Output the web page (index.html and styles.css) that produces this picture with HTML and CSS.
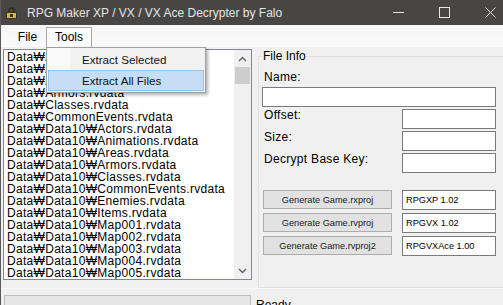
FILE: index.html
```html
<!DOCTYPE html>
<html lang="en">
  <head>
    <meta charset="UTF-8" />
    <title>RPG Maker XP / VX / VX Ace Decrypter by Falo</title>
    <link rel="stylesheet" href="styles.css">
  </head>
  <body>
    <div class="window">
      <!-- Title bar -->
      <div class="titlebar">
        <svg class="app-icon" viewBox="0 0 11 12">
          <path d="M3 6V3.5a2.5 2.5 0 0 1 5 0V6" fill="none" stroke="#2b2b2b" stroke-width="1.6"/>
          <rect x="0.5" y="5.5" width="10" height="6" fill="#d6b54e" stroke="#3a3320"/>
          <rect x="4" y="7" width="3" height="3" fill="#3a3320"/>
        </svg>
        <span class="title">RPG Maker XP / VX / VX Ace Decrypter by Falo</span>
        <div class="controls">
          <span class="ctl">
            <svg width="11" height="11" viewBox="0 0 11 11"><path d="M0 5.5h11" stroke="#e6e6e6"/></svg>
          </span>
          <span class="ctl">
            <svg width="11" height="11" viewBox="0 0 11 11"><rect x="0.5" y="0.5" width="10" height="10" fill="none" stroke="#e6e6e6"/></svg>
          </span>
          <span class="ctl">
            <svg width="11" height="11" viewBox="0 0 11 11"><path d="M0.5 0.5l10 10M10.5 0.5l-10 10" stroke="#e6e6e6"/></svg>
          </span>
        </div>
      </div>

      <!-- Menu bar -->
      <div class="menubar">
        <span class="menu-item">File</span>
        <span class="menu-item open">Tools
          <div class="dropdown">
            <div class="drop-item">Extract Selected</div>
            <div class="drop-item active">Extract All Files</div>
          </div>
        </span>
      </div>

      <div class="main">
        <!-- File list -->
        <div class="listbox">
          <ul class="files">
            <li>Data₩Actors.rvdata</li>
            <li>Data₩Animations.rvdata</li>
            <li>Data₩Areas.rvdata</li>
            <li>Data₩Armors.rvdata</li>
            <li>Data₩Classes.rvdata</li>
            <li>Data₩CommonEvents.rvdata</li>
            <li>Data₩Data10₩Actors.rvdata</li>
            <li>Data₩Data10₩Animations.rvdata</li>
            <li>Data₩Data10₩Areas.rvdata</li>
            <li>Data₩Data10₩Armors.rvdata</li>
            <li>Data₩Data10₩Classes.rvdata</li>
            <li>Data₩Data10₩CommonEvents.rvdata</li>
            <li>Data₩Data10₩Enemies.rvdata</li>
            <li>Data₩Data10₩Items.rvdata</li>
            <li>Data₩Data10₩Map001.rvdata</li>
            <li>Data₩Data10₩Map002.rvdata</li>
            <li>Data₩Data10₩Map003.rvdata</li>
            <li>Data₩Data10₩Map004.rvdata</li>
            <li>Data₩Data10₩Map005.rvdata</li>
          </ul>
          <div class="scrollbar">
            <span class="arrow">
              <svg width="9" height="6" viewBox="0 0 9 6"><path d="M1 5l3.5-3.5L8 5" fill="none" stroke="#606060" stroke-width="1.4"/></svg>
            </span>
            <span class="thumb"></span>
            <span class="track"></span>
            <span class="arrow">
              <svg width="9" height="6" viewBox="0 0 9 6"><path d="M1 1l3.5 3.5L8 1" fill="none" stroke="#606060" stroke-width="1.4"/></svg>
            </span>
          </div>
        </div>

        <!-- File info -->
        <fieldset class="fileinfo">
          <legend>File Info</legend>
          <div class="label name-label">Name:</div>
          <input class="textbox wide" type="text" value="">
          <div class="row">
            <span class="label">Offset:</span>
            <input class="textbox" type="text" value="">
          </div>
          <div class="row">
            <span class="label">Size:</span>
            <input class="textbox" type="text" value="">
          </div>
          <div class="row">
            <span class="label">Decrypt Base Key:</span>
            <input class="textbox" type="text" value="">
          </div>
          <div class="actions">
            <div class="row">
              <button class="gen-button">Generate Game.rxproj</button>
              <input class="textbox small" type="text" value="RPGXP 1.02">
            </div>
            <div class="row">
              <button class="gen-button">Generate Game.rvproj</button>
              <input class="textbox small" type="text" value="RPGVX 1.02">
            </div>
            <div class="row">
              <button class="gen-button">Generate Game.rvproj2</button>
              <input class="textbox small" type="text" value="RPGVXAce 1.00">
            </div>
          </div>
        </fieldset>
      </div>

      <!-- Status strip -->
      <div class="statusbar">
        <div class="progress"></div>
        <span class="status">Ready</span>
      </div>
    </div>
  </body>
</html>
```

FILE: styles.css
```css
* {
  box-sizing: border-box;
  margin: 0;
  padding: 0;
}

body {
  width: 503px;
  height: 305px;
  overflow: hidden;
  background: #f0f0f0;
  font-family: "Liberation Sans", Arial, sans-serif;
  font-size: 12px;
  color: #000;
}

.window {
  width: 513px;
  height: 305px;
  border-left: 1px solid #5a5a5a;
  background: #f0f0f0;
}

/* Title bar */
.titlebar {
  display: flex;
  align-items: center;
  height: 25px;
  background: #474645;
  color: #e4e4e4;
}

.app-icon {
  width: 11px;
  height: 12px;
  margin: 0 10px 0 5px;
}

.title {
  flex: 1;
  font-size: 12px;
}

.controls {
  display: flex;
  height: 25px;
}

.ctl {
  width: 46px;
  display: flex;
  align-items: center;
  justify-content: center;
}

/* Menu bar */
.menubar {
  display: flex;
  align-items: flex-end;
  height: 22px;
  padding-left: 8px;
  background: linear-gradient(#f6f6f6, #fafafa);
}

.menu-item {
  height: 20px;
  line-height: 18px;
  text-align: center;
  width: 37px;
  border: 1px solid transparent;
  border-bottom: none;
}

.menu-item.open {
  position: relative;
  width: 46px;
  border-color: #a8a8a8;
  background: #fbfbfb;
  z-index: 2;
}

.dropdown {
  position: absolute;
  left: -1px;
  top: 19px;
  width: 160px;
  padding: 1px;
  border: 1px solid #a0a0a0;
  background: linear-gradient(to right, #fafafa 23px, #f2f2f2 23px);
  box-shadow: 2px 2px 3px rgba(0, 0, 0, 0.3);
  text-align: left;
}

.drop-item {
  height: 21px;
  line-height: 19px;
  padding-left: 33px;
  border: 1px solid transparent;
  font-size: 11.6px;
  color: #111;
}

.drop-item.active {
  background: #c6def5;
  border-color: #92c4ee;
}

/* Main area */
.main {
  display: flex;
  height: 241px;
  padding: 2px 0 0 2px;
}

.listbox {
  display: flex;
  width: 250px;
  height: 231px;
  border: 1px solid #828790;
  background: #fff;
}

.files {
  flex: 1;
  list-style: none;
  padding: 1px 0 0 3px;
  overflow: hidden;
  line-height: 12px;
  letter-spacing: 0.3px;
  white-space: nowrap;
}

.scrollbar {
  display: flex;
  flex-direction: column;
  width: 17px;
  background: #f0f0f0;
}

.scrollbar .arrow {
  height: 17px;
  display: flex;
  align-items: center;
  justify-content: center;
}

.scrollbar .thumb {
  height: 17px;
  margin: 0 1px;
  background: #cdcdcd;
}

.scrollbar .track {
  flex: 1;
}

/* File info group */
.fileinfo {
  flex: 1;
  margin: 0 6px 0 6px;
  padding: 0 10px 0 3px;
  border: 1px solid #e0e0e0;
}

.fileinfo legend {
  padding: 0 1px;
  line-height: 14px;
}

.label {
  line-height: 12px;
  letter-spacing: 0.3px;
}

.name-label {
  margin-top: 8px;
  padding-left: 2px;
}

.textbox {
  display: block;
  width: 94px;
  height: 20px;
  border: 1px solid #7a7a7a;
  background: #fff;
  padding: 0 3px;
  font-family: "Liberation Sans", Arial, sans-serif;
  font-size: 9.2px;
  color: #000;
  outline: none;
}

.textbox.wide {
  width: 234px;
  margin-top: 4px;
}

.row {
  display: flex;
  justify-content: space-between;
  align-items: flex-start;
  margin-top: 2px;
  padding-left: 2px;
}

.actions {
  display: flex;
  flex-direction: column;
  gap: 3px;
  margin-top: 17px;
}

.actions .row {
  margin-top: 0;
  padding-left: 1px;
}

.gen-button {
  width: 129px;
  height: 19px;
  border: 1px solid #adadad;
  background: #e1e1e1;
  font-family: "Liberation Sans", Arial, sans-serif;
  font-size: 9.2px;
  color: #1a1a1a;
}

/* Status strip */
.statusbar {
  display: flex;
  align-items: flex-start;
  height: 17px;
  padding-top: 6px;
  border-top: 1px solid #f9f9f9;
}

.progress {
  width: 247px;
  height: 20px;
  margin-left: 3px;
  border: 1px solid #bcbcbc;
  background: #e6e6e6;
}

.status {
  margin: 3px 0 0 5px;
  line-height: 14px;
}
```
